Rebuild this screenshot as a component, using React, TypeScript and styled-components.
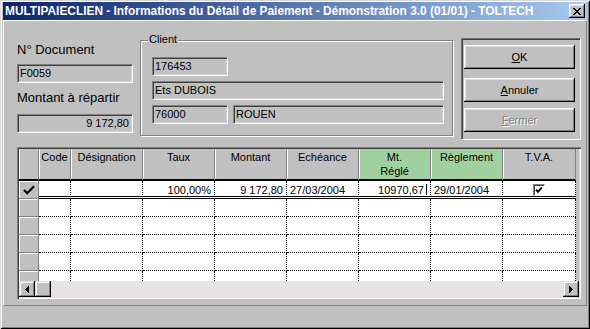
import React from 'react';
import styled, { createGlobalStyle } from 'styled-components';

const GlobalStyle = createGlobalStyle`
  html, body { margin: 0; padding: 0; background: #c0c0c0; }
  body { font-family: "Liberation Sans", Arial, sans-serif; color: #000; }
  * { box-sizing: border-box; }
`;

const FONT = '"Liberation Sans", Arial, sans-serif';
const COLS = '20px 32px 72px 72px 72px 72px 72px 72px 73px';

const Window = styled.div`
  width: 590px;
  height: 329px;
  background: #c0c0c0;
  padding: 2px 3px 3px 3px;
  box-shadow: inset 1px 1px 0 #d8d8d8, inset -1px -1px 0 #000, inset 2px 2px 0 #fff,
    inset -2px -2px 0 #808080;
  display: flex;
  flex-direction: column;
  overflow: hidden;
`;

const TitleBar = styled.div`
  height: 18px;
  flex: none;
  display: flex;
  align-items: center;
  padding-left: 2px;
  background: linear-gradient(to right, #0a246a, #a6caf0);
`;

const TitleText = styled.div`
  color: #fff;
  font: bold 11.9px ${FONT};
  white-space: nowrap;
  line-height: 14px;
`;

const CloseButton = styled.div`
  margin-left: auto;
  margin-right: 2px;
  width: 16px;
  height: 14px;
  background: #c0c0c0;
  box-shadow: inset -1px -1px 0 #000, inset 1px 1px 0 #fff, inset -2px -2px 0 #808080,
    inset 2px 2px 0 #dfdfdf;
  display: flex;
  align-items: center;
  justify-content: center;
`;

const Panel = styled.div`
  height: 286px;
  flex: none;
  border: 1px solid;
  border-color: #fff #808080 #808080 #fff;
  display: flex;
  flex-direction: column;
  padding-left: 13px;
`;

const Footer = styled.div`
  flex: 1;
`;

const TopRow = styled.div`
  display: flex;
  align-items: flex-start;
`;

const LeftCol = styled.div`
  width: 116px;
  margin-top: 21px;
  display: flex;
  flex-direction: column;
`;

const Label = styled.div<{ $mt?: number }>`
  font: 13px ${FONT};
  line-height: 15px;
  margin-top: ${p => p.$mt ?? 0}px;
  white-space: nowrap;
`;

const Field = styled.div<{ $w?: number; $right?: boolean; $mt?: number }>`
  height: 19px;
  width: ${p => (p.$w ? `${p.$w}px` : '100%')};
  flex: none;
  margin-top: ${p => p.$mt ?? 0}px;
  border: 1px solid;
  border-color: #808080 #fff #fff #808080;
  box-shadow: inset 1px 1px 0 #404040, inset -1px -1px 0 #d4d4d4;
  padding: 1px 3px 0 2px;
  font: 11px ${FONT};
  line-height: 15px;
  text-align: ${p => (p.$right ? 'right' : 'left')};
  white-space: nowrap;
  overflow: hidden;
`;

const GroupBox = styled.div`
  position: relative;
  width: 313px;
  height: 96px;
  margin-left: 7px;
  margin-top: 19px;
  border: 1px solid #808080;
  box-shadow: inset 1px 1px 0 #fff, 1px 1px 0 #fff;
  padding: 16px 0 0 11px;
  display: flex;
  flex-direction: column;
  gap: 5px;
`;

const Legend = styled.div`
  position: absolute;
  top: -9px;
  left: 7px;
  padding: 0 1px;
  background: #c0c0c0;
  font: 11px ${FONT};
  line-height: 15px;
`;

const FieldRow = styled.div`
  display: flex;
  gap: 5px;
`;

const ButtonPanel = styled.div`
  width: 120px;
  height: 102px;
  margin-left: 8px;
  margin-top: 17px;
  border: 1px solid;
  border-color: #707070 #fff #fff #707070;
  box-shadow: inset 1px 1px 0 #404040;
  padding: 6px 0 0 2px;
  display: flex;
  flex-direction: column;
  align-items: flex-start;
`;

const Button = styled.div<{ $mt?: number; $disabled?: boolean }>`
  width: 111px;
  height: 24px;
  margin-top: ${p => p.$mt ?? 0}px;
  background: #c0c0c0;
  box-shadow: inset -1px -1px 0 #000, inset 1px 1px 0 #fff, inset -2px -2px 0 #808080,
    inset 2px 2px 0 #dfdfdf;
  font: 11px ${FONT};
  line-height: 24px;
  text-align: center;
  color: ${p => (p.$disabled ? '#808080' : '#000')};
  text-shadow: ${p => (p.$disabled ? '1px 1px 0 #fff' : 'none')};
`;

const Grid = styled.div`
  width: 564px;
  height: 152px;
  margin-top: 7px;
  padding: 2px;
  background: #c0c0c0;
  box-shadow: inset 1px 1px 0 #808080, inset 2px 2px 0 #404040, inset -1px -1px 0 #fff,
    inset -2px -2px 0 #dfdfdf;
  display: flex;
  flex-direction: column;
`;

const GridRow = styled.div<{ $h: number }>`
  display: grid;
  grid-template-columns: ${COLS};
  height: ${p => p.$h}px;
  flex: none;
`;

const HeadCell = styled.div<{ $green?: boolean }>`
  background: ${p => (p.$green ? '#a0d0a0' : '#c0c0c0')};
  border-right: 1px solid #808080;
  border-bottom: 2px solid #000;
  box-shadow: inset 1px 0 0 #fff;
  padding-top: 1px;
  font: 11px ${FONT};
  line-height: 14px;
  text-align: center;
  white-space: nowrap;
`;

const RowHead = styled.div`
  background: #c0c0c0;
  border-right: 1px solid #808080;
  border-bottom: 1px solid #808080;
  box-shadow: inset 1px 1px 0 #fff;
  display: flex;
  align-items: center;
  justify-content: center;
`;

const Cell = styled.div<{ $align?: 'left' | 'right' | 'center'; $double?: boolean }>`
  background: #fff;
  border-right: 1px dotted #000;
  border-bottom: ${p => (p.$double ? '3px double #000' : '1px dotted #000')};
  padding: 2px 3px 0 3px;
  font: 11px ${FONT};
  line-height: 14px;
  text-align: ${p => p.$align ?? 'left'};
  white-space: nowrap;
  overflow: hidden;
`;

const Caret = styled.span`
  display: inline-block;
  width: 1px;
  height: 11px;
  margin-left: 2px;
  background: #000;
  vertical-align: -1px;
`;

const CheckBox = styled.span`
  display: inline-flex;
  align-items: center;
  justify-content: center;
  width: 12px;
  height: 12px;
  margin-top: 1px;
  background: #fff;
  border: 1px solid;
  border-color: #808080 #fff #fff #808080;
  box-shadow: inset 1px 1px 0 #404040;
`;

const GridBody = styled.div`
  flex: 1;
  overflow: hidden;
  display: flex;
  flex-direction: column;
`;

const ScrollBar = styled.div`
  height: 16px;
  flex: none;
  display: flex;
  background: #e6e2e6;
`;

const ScrollBtn = styled.div`
  width: 16px;
  height: 16px;
  flex: none;
  background: #c0c0c0;
  box-shadow: inset -1px -1px 0 #000, inset 1px 1px 0 #dfdfdf, inset -2px -2px 0 #808080,
    inset 2px 2px 0 #fff;
  display: flex;
  align-items: center;
  justify-content: center;
`;

const ScrollSpacer = styled.div`
  flex: 1;
`;

const X_PIXELS: [number, number, number][] = [
  [0, 0, 2], [6, 0, 2],
  [1, 1, 2], [5, 1, 2],
  [2, 2, 4],
  [3, 3, 2],
  [2, 4, 4],
  [1, 5, 2], [5, 5, 2],
  [0, 6, 2], [6, 6, 2],
];

const CloseIcon = () => (
  <svg width="8" height="7" viewBox="0 0 8 7" shapeRendering="crispEdges">
    {X_PIXELS.map(([x, y, w], i) => (
      <rect key={i} x={x} y={y} width={w} height={1} fill="#000" />
    ))}
  </svg>
);

const RowCheck = () => (
  <svg width="12" height="10" viewBox="0 0 12 10">
    <path d="M1 5 L4.2 8.2 L11 1.2" fill="none" stroke="#000" strokeWidth="2.2" />
  </svg>
);

const BoxCheck = () => (
  <svg width="8" height="8" viewBox="0 0 8 8">
    <path d="M1 3.6 L3 5.8 L7 1.4" fill="none" stroke="#000" strokeWidth="1.8" />
  </svg>
);

const Arrow = ({ dir }: { dir: 'left' | 'right' }) => (
  <svg width="4" height="7" viewBox="0 0 4 7" shapeRendering="crispEdges">
    <path d={dir === 'left' ? 'M4 0 L0 3.5 L4 7 Z' : 'M0 0 L4 3.5 L0 7 Z'} fill="#000" />
  </svg>
);

const headers: { t: React.ReactNode; green?: boolean }[] = [
  { t: 'Code' },
  { t: 'Désignation' },
  { t: 'Taux' },
  { t: 'Montant' },
  { t: 'Echéance' },
  { t: <>Mt.<br />Réglé</>, green: true },
  { t: 'Règlement', green: true },
  { t: 'T.V.A.' },
];

const EmptyRow = () => (
  <GridRow $h={18}>
    <RowHead />
    {Array.from({ length: 8 }).map((_, i) => (
      <Cell key={i} />
    ))}
  </GridRow>
);

export default function App() {
  return (
    <>
      <GlobalStyle />
      <Window>
        <TitleBar>
          <TitleText>
            MULTIPAIECLIEN - Informations du Détail de Paiement - Démonstration 3.0 (01/01) - TOLTECH
          </TitleText>
          <CloseButton>
            <CloseIcon />
          </CloseButton>
        </TitleBar>
        <Panel>
          <TopRow>
            <LeftCol>
              <Label>N° Document</Label>
              <Field $mt={7}>F0059</Field>
              <Label $mt={7}>Montant à répartir</Label>
              <Field $mt={9} $right>
                9 172,80
              </Field>
            </LeftCol>
            <GroupBox>
              <Legend>Client</Legend>
              <Field $w={76}>176453</Field>
              <Field $w={292}>Ets DUBOIS</Field>
              <FieldRow>
                <Field $w={76}>76000</Field>
                <Field $w={211}>ROUEN</Field>
              </FieldRow>
            </GroupBox>
            <ButtonPanel>
              <Button>
                <u>O</u>K
              </Button>
              <Button $mt={9}>
                <u>A</u>nnuler
              </Button>
              <Button $mt={6} $disabled>
                <u>F</u>ermer
              </Button>
            </ButtonPanel>
          </TopRow>
          <Grid>
            <GridRow $h={32}>
              <HeadCell />
              {headers.map((h, i) => (
                <HeadCell key={i} $green={h.green}>
                  {h.t}
                </HeadCell>
              ))}
            </GridRow>
            <GridBody>
              <GridRow $h={18}>
                <RowHead>
                  <RowCheck />
                </RowHead>
                <Cell $double />
                <Cell $double />
                <Cell $double $align="right">100,00%</Cell>
                <Cell $double $align="right">9 172,80</Cell>
                <Cell $double>27/03/2004</Cell>
                <Cell $double $align="right">
                  10970,67
                  <Caret />
                </Cell>
                <Cell $double>29/01/2004</Cell>
                <Cell $double $align="center">
                  <CheckBox>
                    <BoxCheck />
                  </CheckBox>
                </Cell>
              </GridRow>
              <EmptyRow />
              <EmptyRow />
              <EmptyRow />
              <EmptyRow />
              <EmptyRow />
            </GridBody>
            <ScrollBar>
              <ScrollBtn>
                <Arrow dir="left" />
              </ScrollBtn>
              <ScrollBtn />
              <ScrollSpacer />
              <ScrollBtn>
                <Arrow dir="right" />
              </ScrollBtn>
            </ScrollBar>
          </Grid>
        </Panel>
        <Footer />
      </Window>
    </>
  );
}
